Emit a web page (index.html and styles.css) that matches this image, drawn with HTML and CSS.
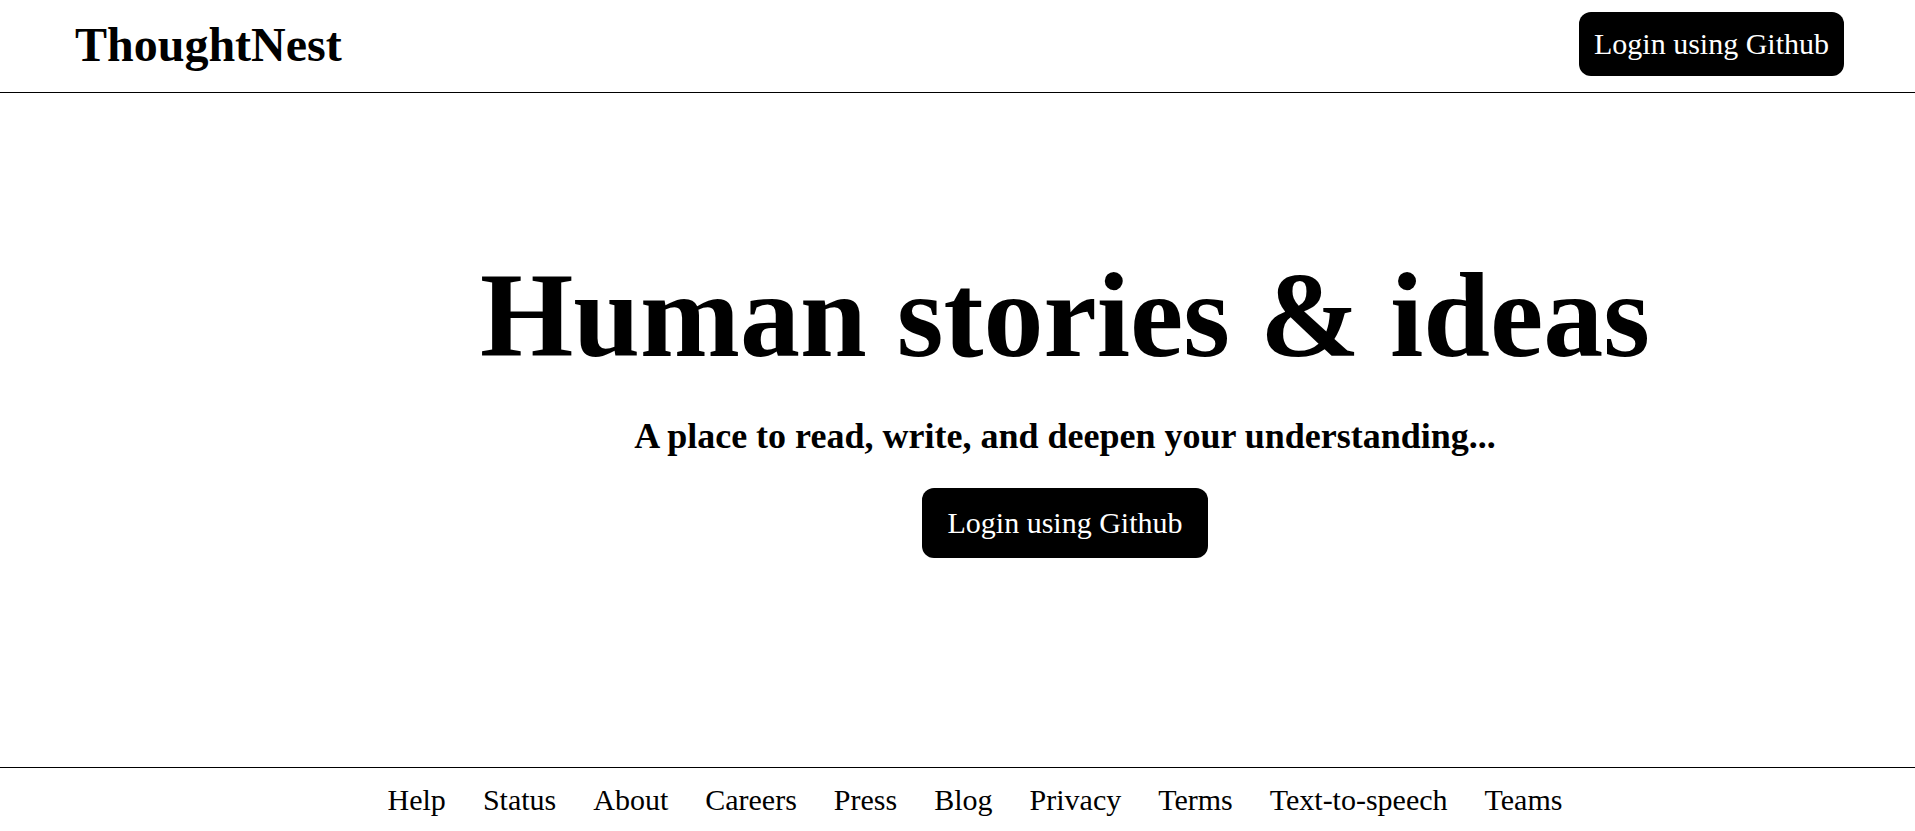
FILE: index.html
```html
<!DOCTYPE html>
<html lang="en">
<head>
<meta charset="utf-8">
<title>ThoughtNest</title>
<link rel="stylesheet" href="styles.css">
</head>
<body>
<header class="topbar">
  <div class="logo">ThoughtNest</div>
  <button class="btn btn-nav">Login using Github</button>
</header>
<main class="hero">
  <h1 class="hero-title">Human stories &amp; ideas</h1>
  <p class="hero-sub">A place to read, write, and deepen your understanding...</p>
  <button class="btn btn-hero">Login using Github</button>
</main>
<footer class="footer">
  <ul class="footer-links">
    <li>Help</li>
    <li>Status</li>
    <li>About</li>
    <li>Careers</li>
    <li>Press</li>
    <li>Blog</li>
    <li>Privacy</li>
    <li>Terms</li>
    <li>Text-to-speech</li>
    <li>Teams</li>
  </ul>
</footer>
</body>
</html>
```
FILE: styles.css
```css
* { box-sizing: border-box; }
html, body { margin: 0; padding: 0; }
body {
  font-family: "Liberation Serif", "Times New Roman", serif;
  color: #000;
  background: #fff;
  min-height: 100vh;
  display: flex;
  flex-direction: column;
}
.topbar {
  height: 93px;
  display: flex;
  align-items: center;
  justify-content: space-between;
  padding: 0 71px 4px 75px;
  border-bottom: 1px solid #000;
}
.logo {
  font-size: 48px;
  font-weight: bold;
}
.btn {
  font-family: "Liberation Serif", "Times New Roman", serif;
  font-size: 30px;
  background: #000;
  color: #fff;
  border: none;
  cursor: pointer;
}
.btn-nav {
  padding: 15px 15px;
  border-radius: 12px;
}
.hero {
  flex: 1;
  display: flex;
  flex-direction: column;
  align-items: center;
  padding-left: 215px;
  padding-top: 154px;
}
.hero-title {
  margin: 0;
  font-size: 120px;
  font-weight: bold;
}
.hero-sub {
  margin: 30px 0 0;
  font-size: 36px;
  font-weight: bold;
}
.btn-hero {
  margin-top: 31px;
  padding: 18px 25px;
  border-radius: 12px;
}
.footer {
  border-top: 1px solid #000;
  padding: 15px 0 14px;
}
.footer-links {
  list-style: none;
  margin: 0;
  padding: 0 0 0 35px;
  display: flex;
  justify-content: center;
  gap: 37px;
  font-size: 30px;
}
```
